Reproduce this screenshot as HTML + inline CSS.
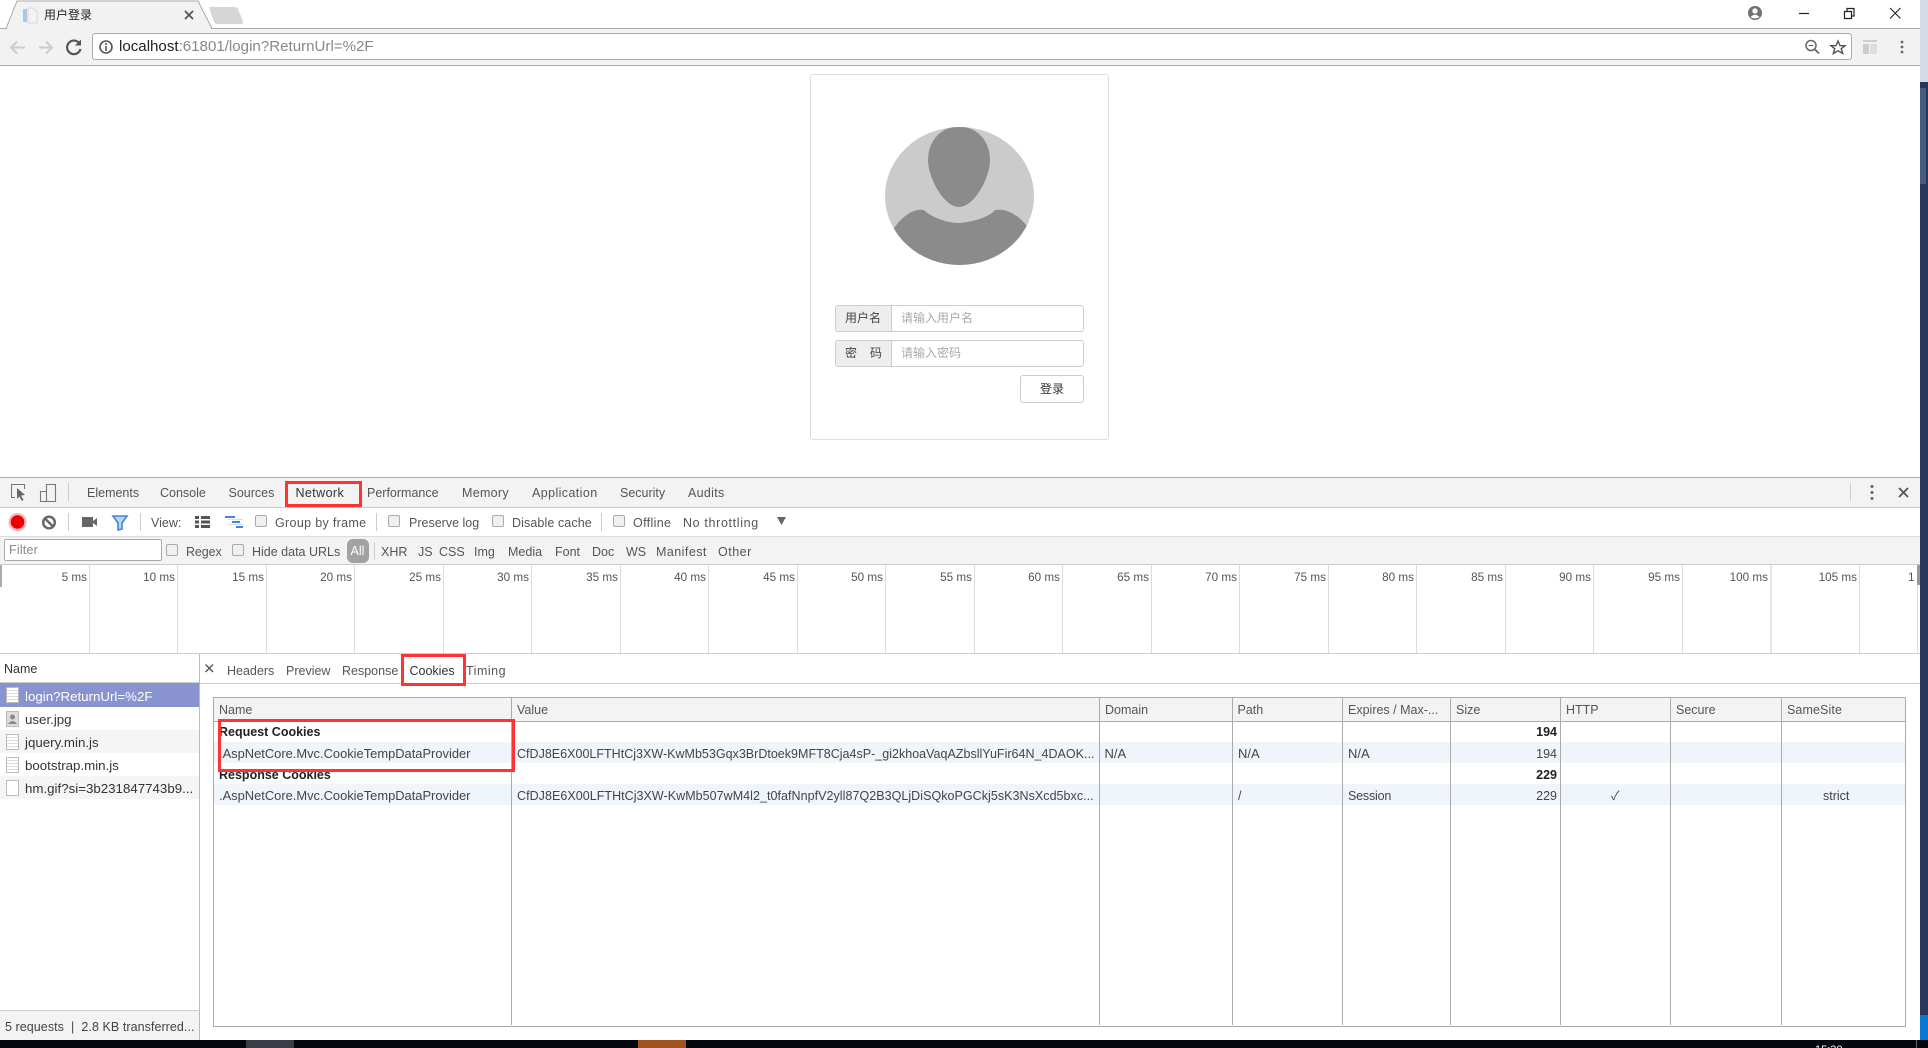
<!DOCTYPE html>
<html><head><meta charset="utf-8"><title>用户登录</title>
<style>
html,body{margin:0;padding:0;width:1928px;height:1048px;overflow:hidden;background:#fff}
body{position:relative;font-family:"Liberation Sans","Noto Sans CJK SC",sans-serif;font-size:12.5px;color:#555}
.b{position:absolute}
.t{position:absolute;white-space:nowrap;line-height:20px;height:20px}
.d{color:#333}
.c{position:absolute;width:10px;height:10px;border:1px solid #aaa;border-radius:2px;background:#f0f0f0}
.tl{position:absolute;white-space:nowrap;line-height:20px;top:568px;color:#555;text-align:right;width:70px;font-size:11.7px}
.tv{position:absolute;top:565px;height:88px;width:1px;background:#ddd}
.cl{position:absolute;top:698px;height:327px;width:1px;background:#aaa}
.r{position:absolute;border:3px solid #f33;box-sizing:border-box}
.th{color:#555;top:700px}
.td{color:#444}
.bd{font-weight:bold;color:#222}
.ic{position:absolute;width:13px;height:16px;border:1px solid #bbb;box-sizing:border-box;background:repeating-linear-gradient(#fff 0 2px,#ddd 2px 3px)}
.ls{font-size:13.3px}
svg{position:absolute;overflow:visible}
</style></head><body>

<!-- browser chrome -->
<div class="b" style="left:0;top:28px;width:1920px;height:1px;background:#aaa"></div>
<div class="b" style="left:0;top:29px;width:1920px;height:36px;background:#f2f2f2"></div>
<div class="b" style="left:0;top:65px;width:1920px;height:1px;background:#aaa"></div>
<svg style="left:0;top:0" width="260" height="30"><path d="M0 28.5H6L17 1H198L212 28.5" fill="#f2f2f2" stroke="#aaa"/><path d="M7 29H211V28H7Z" fill="#f2f2f2"/><path d="M209 7H234Q237 7 238 9L243 21Q244 24 240 24H218Q215 24 214 22Z" fill="#d6d6d6"/>
<path d="M23 9H27V22H23Z" fill="#a8c8e8"/><path d="M28 8H33L37 12V23H28Z" fill="#f4f4f4" stroke="#d8d8d8"/><path d="M185 11L193 19M193 11L185 19" stroke="#555" stroke-width="1.8"/></svg>
<div class="t" style="left:44px;top:5px;font-size:12px;color:#222">用户登录</div>
<svg style="left:0;top:30px" width="90" height="34"><path d="M25 17.5H12M17 11.5L11 17.5L17 23.5" fill="none" stroke="#ccc" stroke-width="2"/><path d="M39 17.5H52M46 11.5L52 17.5L46 23.5" fill="none" stroke="#ccc" stroke-width="2"/><path d="M79.5 13.5A6.8 6.8 0 1 0 80.5 19" fill="none" stroke="#555" stroke-width="2.2"/><path d="M81 9.5V15.5H75Z" fill="#555"/></svg>
<div class="b" style="left:92px;top:33px;width:1760px;height:27px;background:#fff;border:1px solid #aaa;border-radius:3px;box-sizing:border-box"></div>
<svg style="left:98px;top:39px" width="16" height="16"><circle cx="8" cy="8" r="6" fill="none" stroke="#555" stroke-width="1.6"/><path d="M8 7V12M8 4V6" stroke="#555" stroke-width="1.6"/></svg>
<div class="t" style="left:119px;top:37px;font-size:15.1px;color:#888"><span style="color:#222">localhost</span>:61801/login?ReturnUrl=%2F</div>
<svg style="left:1800px;top:36px" width="50" height="22"><circle cx="11" cy="9.5" r="5" fill="none" stroke="#666" stroke-width="1.5"/><path d="M8.5 9.5H13.5" stroke="#666"/><path d="M15 13.5L19 17.5" stroke="#666" stroke-width="1.8"/><path d="M38 5L40 9.7H45L41.2 12.8L42.7 17.5L38 14.8L33.3 17.5L34.8 12.8L31 9.7H36Z" fill="none" stroke="#555" stroke-width="1.4"/></svg>
<svg style="left:1860px;top:38px" width="50" height="20"><path d="M3 2H17V4H3Z" fill="#ccc"/><path d="M3 6H9V16H3Z" fill="#ccc"/><path d="M10 6H17V16H10Z" fill="#ddd"/><circle cx="42" cy="4" r="1.4" fill="#666"/><circle cx="42" cy="9" r="1.4" fill="#666"/><circle cx="42" cy="14" r="1.4" fill="#666"/></svg>
<svg style="left:1745px;top:3px" width="165" height="22"><circle cx="10" cy="10" r="7" fill="#707070"/><circle cx="10" cy="8" r="2.7" fill="#fff"/><path d="M5.5 14Q10 9.5 14.5 14Q10 17 5.5 14Z" fill="#fff"/><path d="M54 10.5H64" stroke="#222" stroke-width="1.2"/><path d="M99.5 8.5H106.5V15.5H99.5ZM102 8V5.5H109V13H107" fill="none" stroke="#222" stroke-width="1.2"/><path d="M145 5L155.5 15.5M155.5 5L145 15.5" stroke="#222" stroke-width="1.1"/></svg>

<!-- right strip -->
<div class="b" style="left:1920px;top:0;width:8px;height:82px;background:#d5dbe8"></div>
<div class="b" style="left:1920px;top:82px;width:8px;height:958px;background:#26375a"></div>
<div class="b" style="left:1920px;top:88px;width:6px;height:96px;background:#455d85"></div>
<div class="b" style="left:1920px;top:1015px;width:8px;height:25px;background:#0a78d0"></div>

<!-- login card -->
<div class="b" style="left:810px;top:74px;width:299px;height:366px;border:1px solid #ddd;border-radius:3px;box-sizing:border-box"></div>
<svg style="left:0;top:0" width="1100" height="300"><defs><clipPath id="av"><ellipse cx="959.5" cy="196" rx="74.5" ry="69"/></clipPath></defs><ellipse cx="959.5" cy="196" rx="74.5" ry="69" fill="#cbcbcb"/><g clip-path="url(#av)" fill="#8b8b8b"><path d="M959 126.5C942 126.5 928 140 928 160C928 178 944 207 959 207C974 207 990 178 990 160C990 140 976 126.5 959 126.5Z"/><path d="M890 234C900 218 912 208 924 210C932 218 948 223 959 223C972 222 988 218 995 210C1008 208 1020 216 1030 230L1040 270H880Z"/></g></svg>
<div class="b" style="left:835px;top:305px;width:249px;height:27px;border:1px solid #ccc;border-radius:3px;box-sizing:border-box;overflow:hidden"><div style="width:55px;height:25px;background:#eee;border-right:1px solid #ccc"></div></div>
<div class="b" style="left:835px;top:340px;width:249px;height:27px;border:1px solid #ccc;border-radius:3px;box-sizing:border-box;overflow:hidden"><div style="width:55px;height:25px;background:#eee;border-right:1px solid #ccc"></div></div>
<div class="t" style="left:845px;top:308px;font-size:12px;color:#444">用户名</div>
<div class="t" style="left:845px;top:343px;font-size:12px;color:#444">密</div>
<div class="t" style="left:870px;top:343px;font-size:12px;color:#444">码</div>
<div class="t" style="left:901px;top:308px;font-size:12px;color:#aaa">请输入用户名</div>
<div class="t" style="left:901px;top:343px;font-size:12px;color:#aaa">请输入密码</div>
<div class="b" style="left:1020px;top:375px;width:64px;height:28px;border:1px solid #ccc;border-radius:3px;box-sizing:border-box"></div>
<div class="t" style="left:1040px;top:379px;font-size:12px;color:#333">登录</div>

<!-- devtools bars -->
<div class="b" style="left:0;top:477px;width:1920px;height:1px;background:#aaa"></div>
<div class="b" style="left:0;top:478px;width:1920px;height:29px;background:#f3f3f3"></div>
<div class="b" style="left:0;top:507px;width:1920px;height:1px;background:#ccc"></div>
<div class="b" style="left:0;top:536px;width:1920px;height:1px;background:#ddd"></div>
<div class="b" style="left:0;top:537px;width:1920px;height:27px;background:#f3f3f3"></div>
<div class="b" style="left:0;top:564px;width:1920px;height:1px;background:#ccc"></div>
<div class="b" style="left:0;top:653px;width:1920px;height:1px;background:#ccc"></div>

<svg style="left:0;top:478px" width="70" height="30"><path d="M15 19.5H11.5V6.5H24.5V11" fill="none" stroke="#777" stroke-width="1.1"/><path d="M17 10L25 17L21 17.5L23.5 22L21.8 23L19.5 18.5L17 21Z" fill="#666"/><path d="M46.5 6.5H55.5V23.5H40.5V13.5H46.5ZM46.5 13.5V23.5" fill="none" stroke="#777" stroke-width="1.1"/><path d="M68.5 5V23" stroke="#ccc"/></svg>
<div class="t" style="left:87px;top:483px">Elements</div>
<div class="t" style="left:160px;top:483px">Console</div>
<div class="t" style="left:228.5px;top:483px">Sources</div>
<div class="t d" style="left:295.5px;top:483px;letter-spacing:.4px">Network</div>
<div class="t" style="left:367px;top:483px">Performance</div>
<div class="t" style="left:462px;top:483px;letter-spacing:.3px">Memory</div>
<div class="t" style="left:532px;top:483px;letter-spacing:.4px">Application</div>
<div class="t" style="left:620px;top:483px">Security</div>
<div class="t" style="left:688px;top:483px;letter-spacing:.3px">Audits</div>
<div class="r" style="left:285px;top:481px;width:77px;height:26px"></div>
<svg style="left:1845px;top:478px" width="75" height="30"><path d="M5.5 5V23" stroke="#ccc"/><circle cx="27" cy="8.5" r="1.5" fill="#666"/><circle cx="27" cy="14.5" r="1.5" fill="#666"/><circle cx="27" cy="20.5" r="1.5" fill="#666"/><path d="M54 10L63 19M63 10L54 19" stroke="#555" stroke-width="1.8"/></svg>

<svg style="left:0;top:508px" width="800" height="28"><circle cx="17.5" cy="14" r="9" fill="#f5b5b5"/><circle cx="17.5" cy="14" r="6.8" fill="#e00"/><circle cx="49" cy="14.5" r="5.8" fill="none" stroke="#666" stroke-width="2.4"/><path d="M45 10.5L53 18.5" stroke="#666" stroke-width="2.4"/><path d="M68.5 5V23M140.5 5V23M376.5 5V23M601.5 5V23" stroke="#ccc"/><path d="M82 9H93V19H82ZM93 13L97 10V18L93 15Z" fill="#666"/><path d="M113 8H127L122 15V21L118 22V15Z" fill="#bcd5f5" stroke="#3f86e0" stroke-width="1.6"/><path d="M195 8H199V11H195ZM201 8H210V11H201ZM195 12.5H199V15.5H195ZM201 12.5H210V15.5H201ZM195 17H199V20H195ZM201 17H210V20H201Z" fill="#555"/><path d="M225 8H235V10H225ZM232 13H240V15H232ZM236 18H243V20H236Z" fill="#3f86e0"/><path d="M228 11H243V12H228ZM228 16H243V17H228Z" fill="#ddd"/><path d="M777 9H786L781.5 17Z" fill="#666"/></svg>
<div class="t" style="left:151px;top:512.5px">View:</div>
<div class="c" style="left:255px;top:515px"></div><div class="t" style="left:275px;top:512.5px;letter-spacing:.33px">Group by frame</div>
<div class="c" style="left:388px;top:515px"></div><div class="t" style="left:409px;top:512.5px">Preserve log</div>
<div class="c" style="left:492px;top:515px"></div><div class="t" style="left:512px;top:512.5px;letter-spacing:.1px">Disable cache</div>
<div class="c" style="left:613px;top:515px"></div><div class="t" style="left:633px;top:512.5px;letter-spacing:.35px">Offline</div>
<div class="t" style="left:683px;top:512.5px;letter-spacing:.65px">No throttling</div>

<div class="b" style="left:4px;top:539px;width:158px;height:22px;background:#fff;border:1px solid #aaa;border-radius:2px;box-sizing:border-box"></div>
<div class="t" style="left:9px;top:540px;color:#888;letter-spacing:.2px">Filter</div>
<div class="c" style="left:166px;top:544px"></div><div class="t" style="left:186px;top:542px;letter-spacing:-.1px">Regex</div>
<div class="c" style="left:232px;top:544px"></div><div class="t" style="left:252px;top:542px">Hide data URLs</div>
<div class="b" style="left:347px;top:539px;width:22px;height:24px;background:#a2a2a2;border-radius:6px"></div>
<div class="t" style="left:350.5px;top:541px;color:#fff">All</div>
<div class="b" style="left:373.5px;top:542px;width:1px;height:18px;background:#ccc"></div>
<div class="t" style="left:381px;top:542px">XHR</div>
<div class="t" style="left:418px;top:542px">JS</div>
<div class="t" style="left:439px;top:542px">CSS</div>
<div class="t" style="left:474px;top:542px">Img</div>
<div class="t" style="left:508px;top:542px">Media</div>
<div class="t" style="left:555px;top:542px">Font</div>
<div class="t" style="left:592px;top:542px">Doc</div>
<div class="t" style="left:626px;top:542px">WS</div>
<div class="t" style="left:656px;top:542px;letter-spacing:.45px">Manifest</div>
<div class="t" style="left:718px;top:542px;letter-spacing:.5px">Other</div>

<!-- timeline -->
<div class="b" style="left:0;top:565px;width:2px;height:22px;background:#aaa"></div>
<div class="tv" style="left:89px"></div><div class="tv" style="left:177px"></div><div class="tv" style="left:266px"></div><div class="tv" style="left:354px"></div><div class="tv" style="left:443px"></div><div class="tv" style="left:531px"></div><div class="tv" style="left:620px"></div><div class="tv" style="left:708px"></div><div class="tv" style="left:797px"></div><div class="tv" style="left:885px"></div><div class="tv" style="left:974px"></div><div class="tv" style="left:1062px"></div><div class="tv" style="left:1151px"></div><div class="tv" style="left:1239px"></div><div class="tv" style="left:1328px"></div><div class="tv" style="left:1416px"></div><div class="tv" style="left:1505px"></div><div class="tv" style="left:1593px"></div><div class="tv" style="left:1682px"></div><div class="tv" style="left:1770px;width:2px;background:#e5e5e5"></div><div class="tv" style="left:1859px"></div><div class="tv" style="left:1917px"></div>
<div class="tl" style="left:17px">5 ms</div><div class="tl" style="left:105px">10 ms</div><div class="tl" style="left:194px">15 ms</div><div class="tl" style="left:282px">20 ms</div><div class="tl" style="left:371px">25 ms</div><div class="tl" style="left:459px">30 ms</div><div class="tl" style="left:548px">35 ms</div><div class="tl" style="left:636px">40 ms</div><div class="tl" style="left:725px">45 ms</div><div class="tl" style="left:813px">50 ms</div><div class="tl" style="left:902px">55 ms</div><div class="tl" style="left:990px">60 ms</div><div class="tl" style="left:1079px">65 ms</div><div class="tl" style="left:1167px">70 ms</div><div class="tl" style="left:1256px">75 ms</div><div class="tl" style="left:1344px">80 ms</div><div class="tl" style="left:1433px">85 ms</div><div class="tl" style="left:1521px">90 ms</div><div class="tl" style="left:1610px">95 ms</div><div class="tl" style="left:1698px">100 ms</div><div class="tl" style="left:1787px">105 ms</div>
<div class="t" style="left:1908px;top:568px;color:#555;font-size:11.7px">1</div>
<div class="b" style="left:1917px;top:565px;width:3px;height:20px;background:#999"></div>

<!-- request list -->
<div class="b" style="left:199px;top:654px;width:1px;height:386px;background:#bbb"></div>
<div class="b" style="left:0;top:682px;width:199px;height:1px;background:#ccc"></div>
<div class="t d" style="left:4px;top:659px">Name</div>
<div class="b" style="left:0;top:683px;width:199px;height:24px;background:#8893cf"></div>
<div class="b" style="left:0;top:730px;width:199px;height:23px;background:#f5f5f5"></div>
<div class="b" style="left:0;top:776px;width:199px;height:23px;background:#f5f5f5"></div>
<div class="ic" style="left:6px;top:687px"></div>
<div class="ic" style="left:6px;top:711px;background:#ddd"></div>
<svg style="left:6px;top:711px" width="13" height="16"><circle cx="6.5" cy="6" r="2.5" fill="#888"/><path d="M2 13Q6.5 7 11 13Z" fill="#888"/></svg>
<div class="ic" style="left:6px;top:734px"></div>
<div class="ic" style="left:6px;top:757px"></div>
<div class="ic" style="left:6px;top:780px;background:#fff"></div>
<div class="t ls" style="left:25px;top:686.5px;color:#fff">login?ReturnUrl=%2F</div>
<div class="t ls d" style="left:25px;top:710px">user.jpg</div>
<div class="t ls d" style="left:25px;top:733px">jquery.min.js</div>
<div class="t ls d" style="left:25px;top:756px">bootstrap.min.js</div>
<div class="t ls d" style="left:25px;top:779px">hm.gif?si=3b231847743b9...</div>
<div class="b" style="left:0;top:1010px;width:199px;height:30px;background:#f3f3f3;border-top:1px solid #ccc;box-sizing:border-box"></div>
<div class="t" style="left:5px;top:1017px;color:#444;letter-spacing:.06px">5 requests &nbsp;|&nbsp; 2.8 KB transferred...</div>

<!-- detail tabs -->
<div class="b" style="left:200px;top:683px;width:1720px;height:1px;background:#ccc"></div>
<svg style="left:204px;top:663px" width="12" height="12"><path d="M1.5 1.5L9 9M9 1.5L1.5 9" stroke="#555" stroke-width="1.4"/></svg>
<div class="t" style="left:227px;top:661px">Headers</div>
<div class="t" style="left:286px;top:661px">Preview</div>
<div class="t" style="left:342px;top:661px">Response</div>
<div class="t d" style="left:409.5px;top:661px">Cookies</div>
<div class="t" style="left:466px;top:661px;letter-spacing:.5px">Timing</div>
<div class="r" style="left:401px;top:654px;width:65px;height:32px"></div>

<!-- cookies table -->
<div class="b" style="left:213px;top:697px;width:1693px;height:330px;border:1px solid #aaa;box-sizing:border-box;background:#fff"></div>
<div class="b" style="left:214px;top:698px;width:1691px;height:23px;background:#f3f3f3;border-bottom:1px solid #aaa"></div>
<div class="b" style="left:214px;top:742px;width:1691px;height:21px;background:#f0f5fc"></div>
<div class="b" style="left:214px;top:784px;width:1691px;height:21px;background:#f0f5fc"></div>
<div class="cl" style="left:511px"></div><div class="cl" style="left:1099px"></div><div class="cl" style="left:1232px"></div><div class="cl" style="left:1342px"></div><div class="cl" style="left:1450px"></div><div class="cl" style="left:1560px"></div><div class="cl" style="left:1670px"></div><div class="cl" style="left:1781px"></div>
<div class="t th" style="left:219px">Name</div>
<div class="t th" style="left:517px">Value</div>
<div class="t th" style="left:1105px">Domain</div>
<div class="t th" style="left:1237.5px">Path</div>
<div class="t th" style="left:1348px">Expires / Max-...</div>
<div class="t th" style="left:1456px">Size</div>
<div class="t th" style="left:1566px">HTTP</div>
<div class="t th" style="left:1676px">Secure</div>
<div class="t th" style="left:1787px;letter-spacing:.1px">SameSite</div>

<div class="t bd" style="left:219px;top:722px">Request Cookies</div>
<div class="t bd" style="left:1456px;width:101px;text-align:right;top:722px">194</div>
<div class="t td" style="left:219px;top:744px;font-size:12.9px">.AspNetCore.Mvc.CookieTempDataProvider</div>
<div class="t td" style="left:517px;top:744px;width:580px;overflow:hidden;letter-spacing:.015px">CfDJ8E6X00LFTHtCj3XW-KwMb53Gqx3BrDtoek9MFT8Cja4sP-_gi2khoaVaqAZbsllYuFir64N_4DAOK...</div>
<div class="t td" style="left:1104.5px;top:744px;font-size:13px">N/A</div>
<div class="t td" style="left:1238px;top:744px;font-size:13px">N/A</div>
<div class="t td" style="left:1348px;top:744px;font-size:13px">N/A</div>
<div class="t td" style="left:1456px;width:101px;text-align:right;top:744px">194</div>
<div class="t bd" style="left:219px;top:765px">Response Cookies</div>
<div class="t bd" style="left:1456px;width:101px;text-align:right;top:765px">229</div>
<div class="t td" style="left:219px;top:786px;font-size:12.9px">.AspNetCore.Mvc.CookieTempDataProvider</div>
<div class="t td" style="left:517px;top:786px;width:580px;overflow:hidden;letter-spacing:.045px">CfDJ8E6X00LFTHtCj3XW-KwMb507wM4l2_t0fafNnpfV2yll87Q2B3QLjDiSQkoPGCkj5sK3NsXcd5bxc...</div>
<div class="t td" style="left:1238px;top:786px">/</div>
<div class="t td" style="left:1348px;top:786px;letter-spacing:-.2px">Session</div>
<div class="t td" style="left:1456px;width:101px;text-align:right;top:786px">229</div>
<div class="t td" style="left:1611px;top:786px">✓</div>
<div class="t td" style="left:1823px;top:786px">strict</div>
<div class="r" style="left:218px;top:719px;width:297px;height:53px"></div>

<!-- taskbar -->
<div class="b" style="left:0;top:1040px;width:1928px;height:8px;background:#05070f"></div>
<div class="b" style="left:246px;top:1040px;width:48px;height:8px;background:#3a3c46"></div>
<div class="b" style="left:638px;top:1040px;width:48px;height:8px;background:#a0521f"></div>
<div class="b" style="left:1916px;top:1040px;width:1px;height:8px;background:#666"></div>
<div class="b" style="left:1815px;top:1044px;width:32px;height:4px;overflow:hidden"><div style="color:#fff;font-size:11px;line-height:13px;margin-top:0">15:30</div></div>
</body></html>
